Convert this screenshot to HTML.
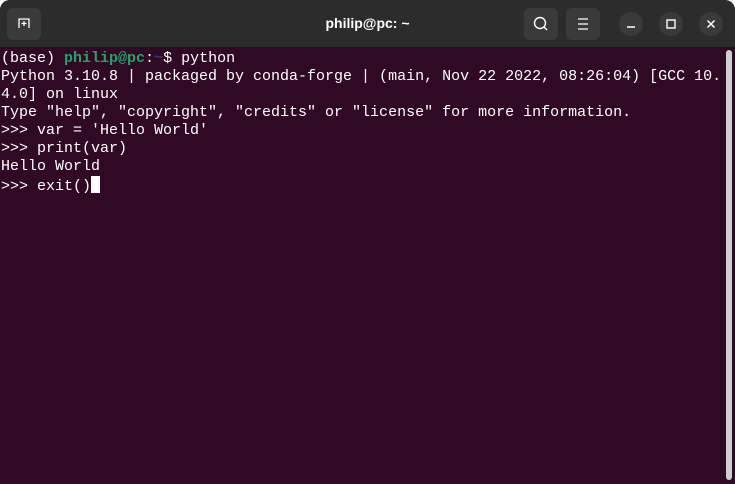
<!DOCTYPE html>
<html><head><style>
html,body{margin:0;padding:0;width:735px;height:484px;overflow:hidden;background:#fff}
.win{position:absolute;left:0;top:0;width:735px;height:484px;border-radius:10px 10px 0 0;overflow:hidden;background:#300a24}
.hdr{position:absolute;left:0;top:0;width:735px;height:47px;background:#2c2c2c}
.btn{position:absolute;top:8px;width:34px;height:32px;border-radius:6px;background:#3a3a3a}
.circ{position:absolute;top:12px;width:24px;height:24px;border-radius:50%;background:#3a3a3a}
.title{position:absolute;left:0;right:0;top:15px;text-align:center;color:#fff;font:bold 14px "Liberation Sans",sans-serif}
pre{position:absolute;left:1px;top:50px;margin:0;font:15px/18px "Liberation Mono",monospace;color:#fff;white-space:pre}
.g{color:#26a269;font-weight:bold}.b{color:#12488b;font-weight:bold}
.cur{display:inline-block;width:9px;height:17px;background:#fff;vertical-align:-3px}
.sb{position:absolute;left:726px;top:50px;width:6px;height:430px;border-radius:3px;background:#cfcfcf}
</style></head><body><div class="win">
<div class="hdr">
<div class="btn" style="left:7px"><svg width="34" height="32"><path d="M12 20V11h10v9M17 13v5M14.5 15.5h5" stroke="#fff" stroke-width="1.3" fill="none"/></svg></div>
<div class="title">philip@pc: ~</div>
<div class="btn" style="left:524px"><svg width="34" height="32"><circle cx="16" cy="15" r="5.5" stroke="#fff" stroke-width="1.4" fill="none"/><path d="M20 19l3 3" stroke="#fff" stroke-width="1.4"/></svg></div>
<div class="btn" style="left:566px"><svg width="34" height="32"><path d="M12 11h10M12 16h10M12 21h10" stroke="#fff" stroke-width="1.3"/></svg></div>
<div class="circ" style="left:619px"><svg width="24" height="24"><path d="M8 15h8" stroke="#fff" stroke-width="1.5"/></svg></div>
<div class="circ" style="left:659px"><svg width="24" height="24"><rect x="8" y="8" width="8" height="8" stroke="#fff" stroke-width="1.4" fill="none"/></svg></div>
<div class="circ" style="left:699px"><svg width="24" height="24"><path d="M8.5 8.5l7 7M15.5 8.5l-7 7" stroke="#fff" stroke-width="1.5"/></svg></div>
</div>
<pre>(base) <span class="g">philip@pc</span>:<span class="b">~</span>$ python
Python 3.10.8 | packaged by conda-forge | (main, Nov 22 2022, 08:26:04) [GCC 10.
4.0] on linux
Type "help", "copyright", "credits" or "license" for more information.
&gt;&gt;&gt; var = 'Hello World'
&gt;&gt;&gt; print(var)
Hello World
&gt;&gt;&gt; exit()<span class="cur"></span></pre>
<div class="sb"></div>
</div></body></html>
